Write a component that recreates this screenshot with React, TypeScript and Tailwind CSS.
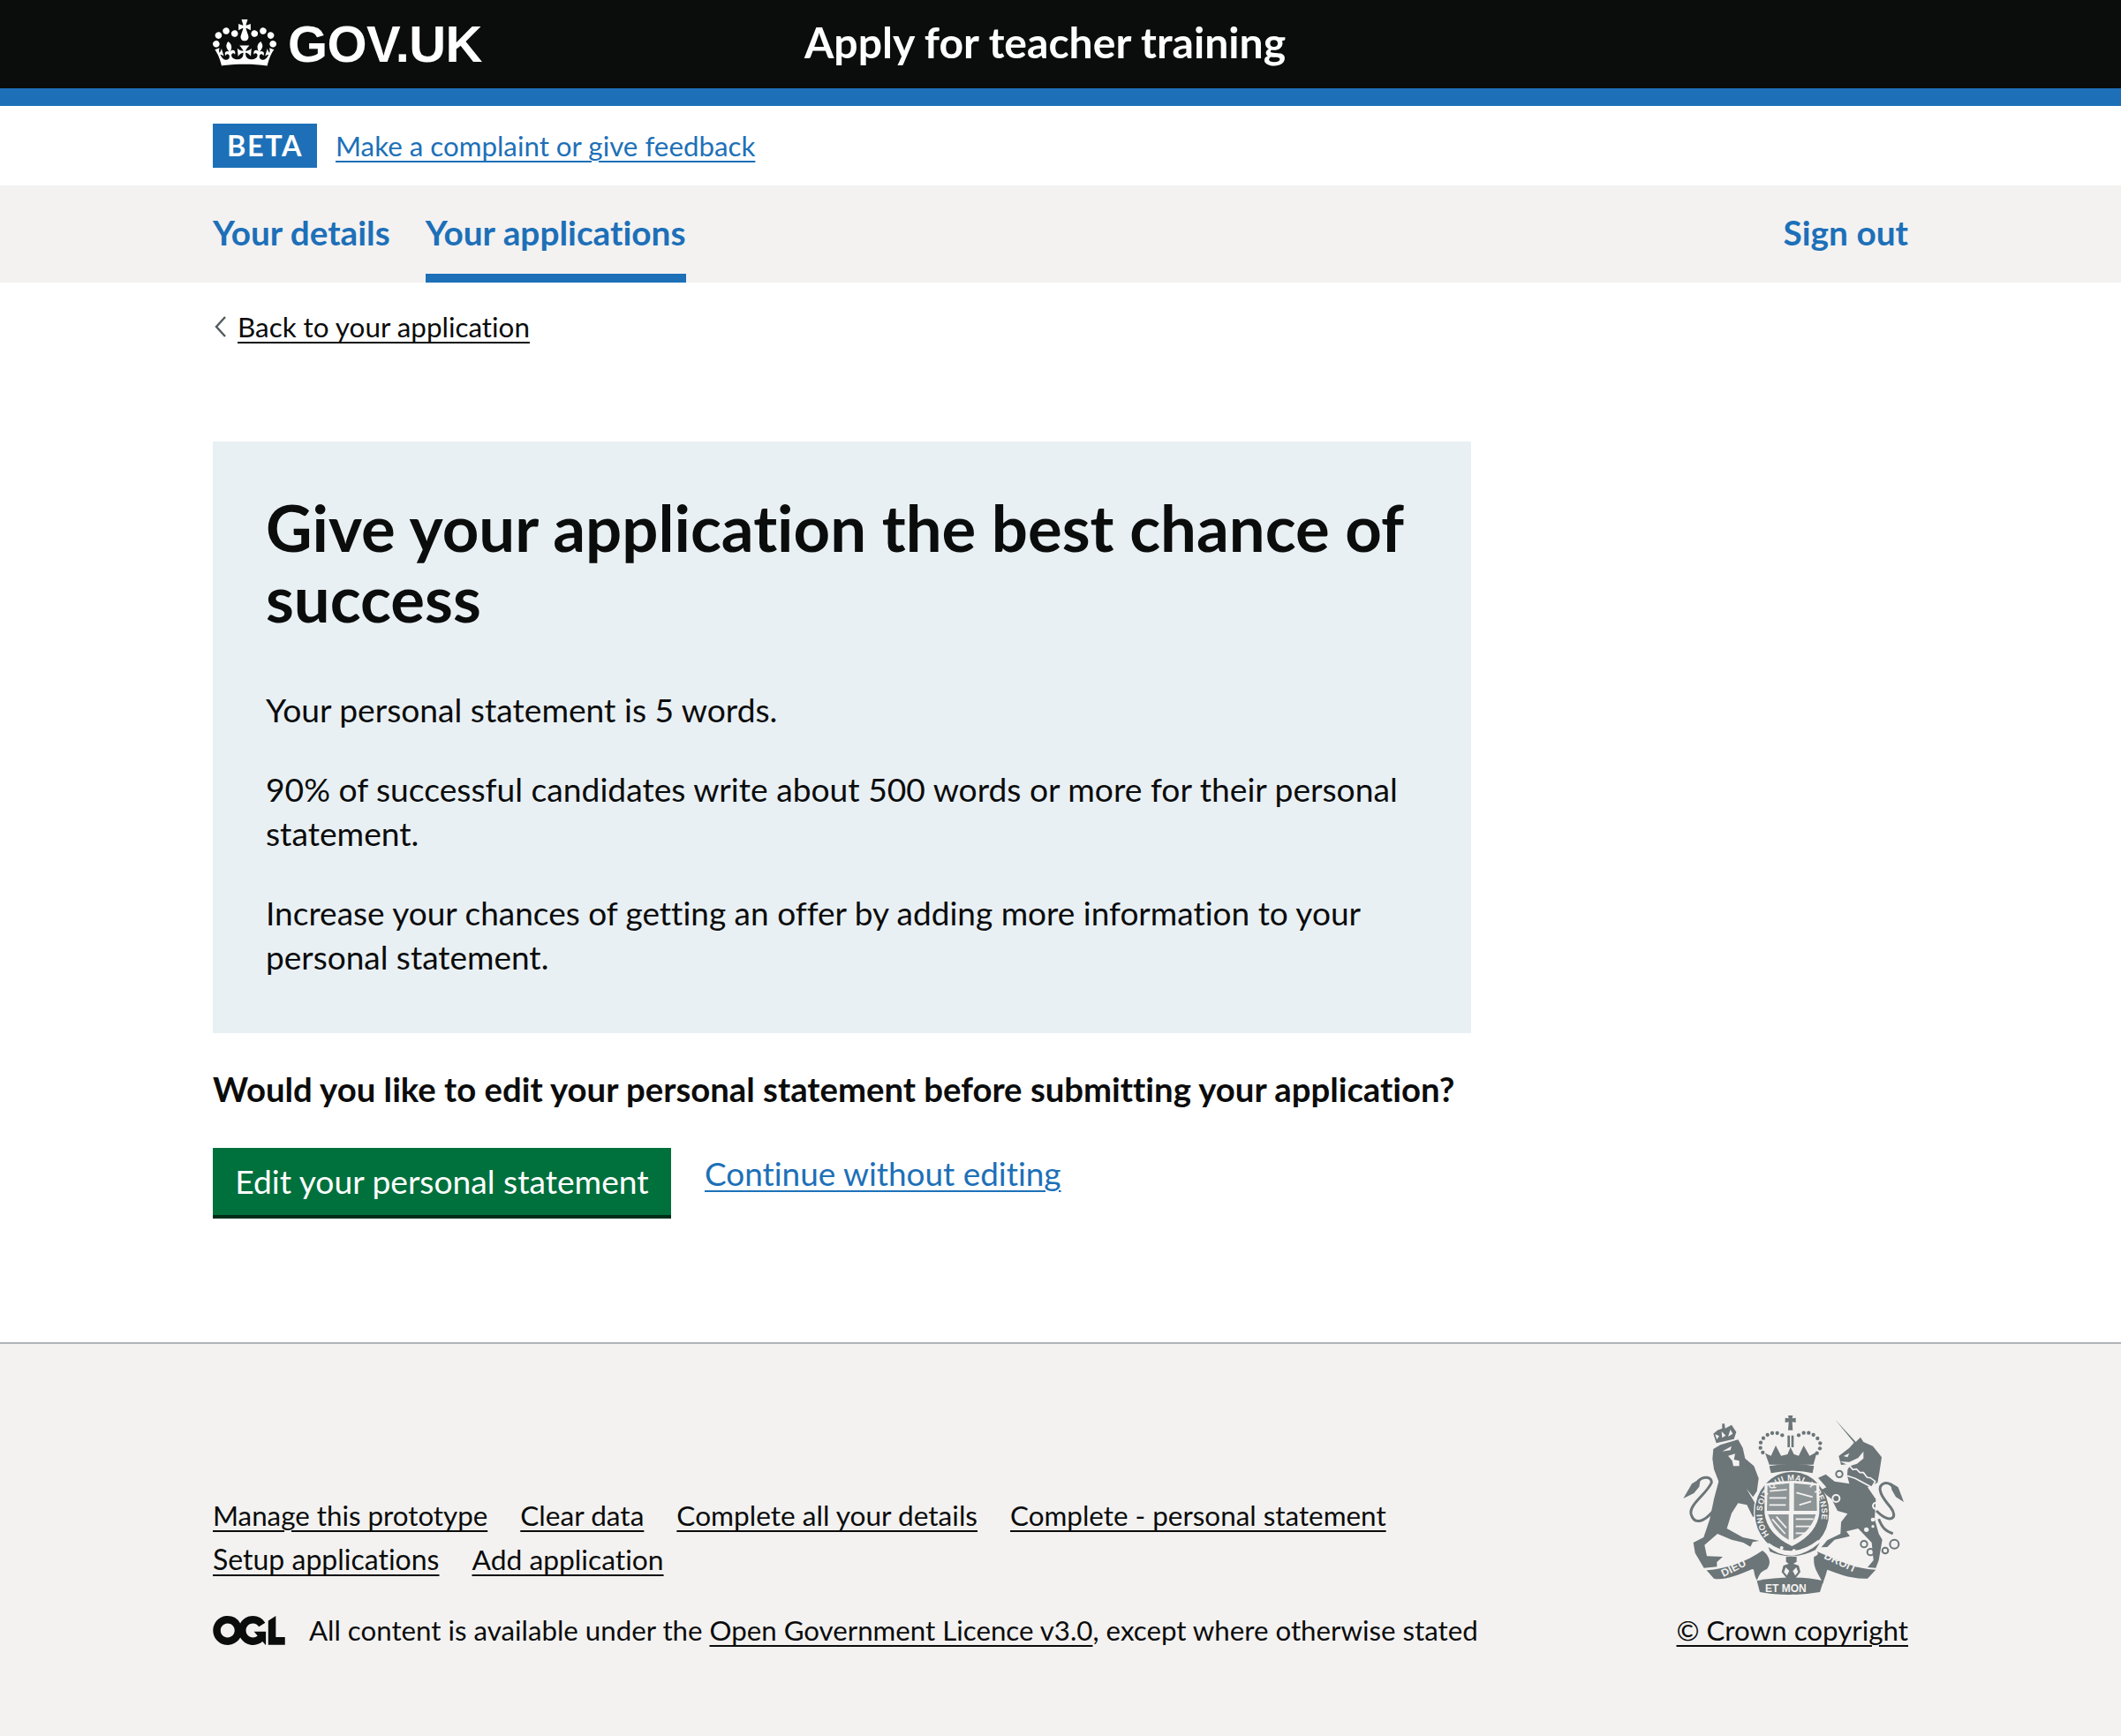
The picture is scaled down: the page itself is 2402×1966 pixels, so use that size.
import React from "react";

const Crown = () => (
  <svg viewBox="0 0 132 97" className="w-[72px] h-[53px] shrink-0 -mt-[3px]" fill="#fff" aria-hidden="true">
    <path d="M25 30.2c3.5 1.5 7.7-.2 9.1-3.7 1.5-3.6-.2-7.8-3.9-9.2-3.6-1.4-7.6.3-9.1 3.9-1.4 3.5.3 7.5 3.9 9zM9 39.5c3.6 1.5 7.8-.2 9.2-3.7 1.5-3.6-.2-7.8-3.9-9.1-3.6-1.5-7.6.2-9.1 3.8-1.4 3.5.3 7.5 3.8 9zM4.4 57.2c3.5 1.5 7.7-.2 9.1-3.8 1.5-3.6-.2-7.7-3.9-9.1-3.5-1.5-7.6.3-9.1 3.8-1.4 3.5.3 7.6 3.9 9.1zm38.3-21.4c3.5 1.5 7.7-.2 9.1-3.8 1.5-3.6-.2-7.7-3.9-9.1-3.6-1.5-7.6.3-9.1 3.8-1.3 3.6.4 7.7 3.9 9.1zm64.4-5.6c-3.6 1.5-7.8-.2-9.1-3.7-1.5-3.6.2-7.8 3.8-9.2 3.6-1.4 7.7.3 9.2 3.9 1.3 3.5-.4 7.5-3.9 9zm15.9 9.3c-3.6 1.5-7.7-.2-9.1-3.7-1.5-3.6.2-7.8 3.7-9.1 3.6-1.5 7.7.2 9.2 3.8 1.5 3.5-.3 7.5-3.8 9zm4.7 17.7c-3.6 1.5-7.8-.2-9.2-3.8-1.5-3.6.2-7.7 3.9-9.1 3.6-1.5 7.7.3 9.2 3.8 1.3 3.5-.4 7.6-3.9 9.1zM89.3 35.8c-3.6 1.5-7.8-.2-9.2-3.8-1.4-3.6.2-7.7 3.9-9.1 3.6-1.5 7.7.3 9.2 3.8 1.4 3.6-.3 7.7-3.9 9.1zM69.7 17.7l8.9 4.7V9.3l-8.9 2.8c-.2-.3-.5-.6-.9-.9L72.4 0H59.6l3.5 11.2c-.3.3-.6.5-.9.9l-8.8-2.8v13.1l8.8-4.7c.3.3.6.7.9.9l-5 15.4v.1c-.2.8-.4 1.6-.4 2.4 0 4.1 3.1 7.5 7 8.1h.2c.3 0 .7.1 1 .1.4 0 .7 0 1-.1h.2c4-.6 7.1-4.1 7.1-8.1 0-.8-.1-1.7-.4-2.4V34l-5.1-15.4c.4-.2.7-.6 1-.9zM66 92.8c16.9 0 32.8 1.1 47.1 3.2 4-16.9 8.9-26.7 14-33.5l-9.6-3.4c1 4.9 1.1 7.2 0 10.2-1.5-1.4-3-4.3-4.2-8.7L108.6 76c2.8-2 5-3.2 7.5-3.3-4.4 9.4-10 11.9-13.6 11.2-4.3-.8-6.3-4.6-5.6-7.9 1-4.7 5.7-5.9 8-.5 4.3-8.7-3-11.4-7.6-8.8 7.1-7.2 7.9-13.5 2.1-21.1-8 6.1-8.1 12.3-4.5 20.8-4.7-5.4-12.1-2.5-9.5 6.2 3.4-5.2 7.9-2 7.2 3.1-.6 4.3-6.4 7.8-13.5 7.2-10.3-.9-10.9-8-11.2-13.8 2.5-.5 7.1 1.8 11 7.3L80.2 60c-4.1 4.4-8 5.3-12.3 5.4 1.4-4.4 8-11.6 8-11.6H55.5s6.4 7.2 7.9 11.6c-4.2-.1-8-1-12.3-5.4l1.4 16.4c3.9-5.5 8.5-7.7 10.9-7.3-.3 5.8-.9 12.8-11.1 13.8-7.2.6-12.9-2.9-13.5-7.2-.7-5 3.8-8.3 7.1-3.1 2.7-8.7-4.6-11.6-9.4-6.2 3.7-8.5 3.6-14.7-4.6-20.8-5.8 7.6-5 13.9 2.2 21.1-4.7-2.6-11.9.1-7.7 8.8 2.3-5.5 7.1-4.2 8.1.5.7 3.3-1.3 7.1-5.7 7.9-3.5.7-9-1.8-13.5-11.2 2.5.1 4.7 1.3 7.5 3.3l-4.7-15.4c-1.2 4.4-2.7 7.2-4.3 8.7-1.1-3-.9-5.3 0-10.2l-9.5 3.4c5 6.9 9.9 16.7 14 33.5 14.8-2.1 30.8-3.2 47.7-3.2z" />
  </svg>
);

const Ogl = () => (
  <svg viewBox="0 0 483.2 195.7" className="w-[82px] h-[33px] shrink-0" fill="#0b0c0c" aria-hidden="true">
    <path d="M421.5 142.8V.1l-50.7 32.3v161.1h112.4v-50.7zm-122.3-9.6A47.12 47.12 0 0 1 221 97.8c0-26 21.1-47.1 47.1-47.1 16.7 0 31.4 8.7 39.7 21.8l42.7-27.2A97.63 97.63 0 0 0 268.1 0c-36.5 0-68.3 20.1-85.1 49.7A98 98 0 0 0 97.8 0C43.9 0 0 43.9 0 97.8s43.9 97.8 97.8 97.8c36.5 0 68.3-20.1 85.1-49.7a97.76 97.76 0 0 0 149.6 25.4l19.4 22.2h3v-87.8h-80l24.3 27.5zM97.8 145c-26 0-47.1-21.1-47.1-47.1s21.1-47.1 47.1-47.1 47.2 21 47.2 47S123.8 145 97.8 145" />
  </svg>
);

const G = "#6c7578";
const BG = "#f3f2f1";

const Crest = () => (
  <svg viewBox="135 65 750 612" className="w-[250px] h-[204px] mr-[5px]" aria-hidden="true">
    <defs>
      <path id="garter" d="M432 478 A101 112 0 1 1 578 478" />
    </defs>
    {/* lion */}
    <path fill={G} d="M238 182 L262 168 L322 150 L338 178 L346 214 L376 240 L392 282 L386 325 L373 345 L350 316 L385 375 L392 410 L372 412 L352 372 L322 366 L300 400 L284 452 L338 482 L394 494 L372 498 L364 514 L340 500 L300 490 L252 470 L208 508 L216 546 L270 548 L250 566 L250 582 L206 586 L176 535 L170 500 L205 482 L226 420 L240 352 L256 292 L240 250 L235 215 Z" />
    <path fill={BG} d="M268 190 L300 172 L296 186 Z M288 205 L312 198 L308 218 L326 222 L326 240 L306 240 L302 222 Z" />
    <path fill="none" stroke={G} strokeWidth="9" d="M238 392 C205 432 172 440 162 402 C156 370 215 335 232 296 C232 276 205 272 185 292" />
    <path fill={G} d="M195 282 L165 300 L136 350 L172 332 L190 310 Z" />
    {/* lion crown */}
    <path fill={G} d="M248 162 L238 130 L252 118 L268 112 L268 96 L276 96 L278 112 L300 100 L316 124 L308 148 Z" />
    <path fill={BG} d="M250 150 L244 132 L258 138 Z M268 144 L266 122 L280 136 Z M288 140 L296 116 L304 130 Z" />
    {/* central crown */}
    <g fill={G}>
      <path d="M492 68 L508 68 L506 78 L518 76 L518 92 L506 90 L508 118 L492 118 L494 90 L482 92 L482 76 L494 78 Z" />
      <rect x="490" y="136" width="8" height="40" />
      <rect x="503" y="136" width="8" height="40" />
      <path d="M414 196 L434 205 L450 170 L468 205 L490 200 L500 176 L512 200 L528 205 L545 170 L565 205 L590 192 L578 235 L428 235 Z" />
      <path d="M428 240 Q505 225 580 240 L575 264 Q505 248 434 264 Z" />
      {[[398,178],[399,160],[408,145],[422,134],[438,128],[455,128],[472,135],[528,135],[545,127],[562,127],[578,134],[592,146],[601,162],[600,180],[590,196],[406,194]].map(([x,y],i)=>(<circle key={i} cx={x} cy={y} r="6.5"/>))}
    </g>
    {/* garter and shield */}
    <ellipse cx="505" cy="398" rx="128" ry="140" fill={G} stroke={BG} strokeWidth="4" />
    <path fill={BG} d="M412 300 Q505 280 598 300 L598 400 Q590 470 505 512 Q420 470 412 400 Z" />
    <path fill={G} d="M422 306 L496 298 L496 392 L420 392 Z M512 298 L588 306 L590 392 L512 392 Z M424 404 L494 404 L494 490 Q445 465 424 404 Z M510 404 L586 404 Q568 465 510 490 Z" opacity="0.75" />
    <path stroke={BG} strokeWidth="5" fill="none" d="M430 325 L488 320 M428 348 L486 348 M428 372 L484 372 M520 330 L575 345 M530 372 L570 360 M438 420 L482 470 M452 412 L486 450 M518 420 L578 420 M518 445 L570 445 M518 468 L552 468" />
    <text fontFamily="Liberation Sans, sans-serif" fontWeight="700" fontSize="28" letterSpacing="1.5" fill={BG}>
      <textPath href="#garter" startOffset="6">HONI SOIT QUI MAL Y PENSE</textPath>
    </text>
    <path fill={BG} d="M425 500 Q505 560 595 490 L600 500 Q505 580 425 515 Z" />
    <path fill={G} d="M425 515 Q505 580 600 500 L585 525 Q505 565 430 530 Z" />
    <circle cx="470" cy="518" r="6" fill={BG} />
    <circle cx="512" cy="528" r="6" fill={BG} />
    {/* unicorn */}
    <path fill={G} d="M652 82 L722 158 L738 142 L748 158 L780 172 L810 210 L802 262 L796 296 L762 312 L790 352 L786 420 L800 470 L812 490 L800 560 L790 586 L762 584 L782 560 L776 500 L730 452 L690 462 L702 478 L650 490 L625 515 L605 516 L625 492 L670 470 L672 430 L694 402 L660 392 L640 352 L622 338 L606 320 L622 312 L594 280 L620 268 L650 292 L700 300 L690 262 L702 232 L672 236 L664 206 L700 178 L716 160 Z" />
    <path fill={BG} d="M680 206 L700 196 L694 210 Z M668 224 L700 226 L730 212 L748 190 L748 214 L726 232 L702 240 Z" />
    <path fill={G} stroke={BG} strokeWidth="5" d="M692 250 L700 238 L712 252 L724 250 L736 262 L748 262 L760 278 L772 280 L788 292 L776 312 L720 282 L690 272 Z" />
    <g fill="none" stroke={G} strokeWidth="6">
      <circle cx="666" cy="267" r="11" />
      <circle cx="655" cy="350" r="12" stroke={BG} />
      <circle cx="790" cy="375" r="10" stroke={BG} />
      <circle cx="750" cy="505" r="11" />
      <circle cx="772" cy="532" r="11" />
      <circle cx="822" cy="527" r="10" />
      <circle cx="853" cy="505" r="15" />
    </g>
    <g fill={BG}>
      <circle cx="780" cy="422" r="7" /><circle cx="758" cy="456" r="8" /><circle cx="780" cy="445" r="5" />
    </g>
    <path fill="none" stroke={G} strokeWidth="9" d="M792 392 C840 440 868 415 840 380 C815 350 785 310 820 298 C838 296 846 305 852 318" />
    <path fill={G} d="M840 296 L866 312 L885 362 L858 345 L844 320 Z" />
    <path fill="none" stroke={G} strokeWidth="9" d="M800 420 C815 460 832 462 848 470" />
    {/* fleur */}
    <path fill={G} d="M485 548 H521 V565 L510 572 L528 578 L534 600 L516 622 L502 628 L488 622 L470 600 L476 578 L494 572 L485 565 Z" />
    <path fill={BG} d="M484 584 L496 596 L488 612 L478 600 Z M520 584 L508 596 L516 612 L526 600 Z" />
    {/* scroll */}
    <path fill={G} d="M215 594 C280 590 350 565 405 527 C430 545 436 570 420 590 C395 600 395 610 386 628 C372 602 380 590 370 590 C320 612 270 630 240 622 Z" />
    <path fill={G} d="M580 548 C600 540 592 535 590 530 C660 560 720 590 790 592 L762 622 C700 625 650 600 625 592 C620 612 614 625 610 640 C600 610 575 590 580 548 Z" />
    <path fill={G} d="M386 630 C460 615 550 615 612 630 L600 668 C530 680 460 680 396 668 Z" />
    <g fontFamily="Liberation Sans, sans-serif" fontWeight="700" fill={BG}>
      <text transform="translate(272 617) rotate(-27)" fontSize="36" letterSpacing="1">DIEU</text>
      <text x="414" y="667" fontSize="36">ET MON</text>
      <text transform="translate(612 553) rotate(25)" fontSize="36" letterSpacing="1">DROIT</text>
    </g>
  </svg>
);

const Chevron = () => (
  <svg viewBox="0 0 14 26" className="w-[14px] h-[26px] shrink-0" fill="none" stroke="#505a5f" strokeWidth="2.4" aria-hidden="true">
    <path d="M12 2 L2 13 L12 24" />
  </svg>
);

const fl = "underline decoration-2 underline-offset-[5px] text-[#0b0c0c]";

export default function App() {
  return (
    <div className="min-h-[1966px] bg-white text-[#0b0c0c] [font-family:Lato,sans-serif] [font-variant-ligatures:none] flex flex-col">
      <header className="bg-[#0b0c0c] h-[100px] px-[241px] flex items-center shrink-0">
        <div className="flex items-center w-[670px]">
          <Crown />
          <span className="ml-[13px] text-white text-[58px] leading-none font-bold tracking-[-0.6px] [font-family:'Liberation_Sans',sans-serif]">GOV.UK</span>
        </div>
        <span className="text-white text-[48.1px] leading-[60px] font-bold -mt-[5px]">Apply for teacher training</span>
      </header>
      <div className="h-[20px] bg-[#1d70b8] shrink-0" />
      <div className="h-[90px] px-[241px] flex items-center shrink-0">
        <strong className="bg-[#1d70b8] text-white h-[50px] w-[118px] flex items-center justify-center text-[32.4px] font-bold tracking-[1.6px]">BETA</strong>
        <a className="ml-[21px] text-[31.3px] leading-[40px] text-[#1d70b8] underline decoration-2 underline-offset-[5px]">Make a complaint or give feedback</a>
      </div>
      <nav className="h-[110px] bg-[#f3f2f1] px-[241px] flex justify-between shrink-0">
        <ul className="flex gap-[40px]">
          <li className="pt-[28px] pb-[22px] border-b-[10px] border-transparent text-[38.7px] leading-[50px] font-bold text-[#1d70b8]">Your details</li>
          <li className="pt-[28px] pb-[22px] border-b-[10px] border-[#1d70b8] text-[38.8px] leading-[50px] font-bold text-[#1d70b8]">Your applications</li>
        </ul>
        <a className="pt-[28px] text-[38.8px] leading-[50px] font-bold text-[#1d70b8]">Sign out</a>
      </nav>
      <main className="px-[241px] flex-1">
        <a className="mt-[30px] flex items-center gap-[12px] text-[31.4px] leading-[40px] pl-[2px]">
          <Chevron />
          <span className={fl}>Back to your application</span>
        </a>
        <section className="mt-[110px] w-[1425px] bg-[#e9f0f4] pt-[57px] pb-[60px] px-[60px]">
          <h1 className="text-[72.5px] leading-[80px] font-bold mb-[62px]">Give your application the best chance of success</h1>
          <p className="text-[37.2px] leading-[50px] mb-[40px]">Your personal statement is 5 words.</p>
          <p className="text-[37.2px] leading-[50px] mb-[40px]">90% of successful candidates write about 500 words or more for their personal statement.</p>
          <p className="text-[37px] leading-[50px] pb-[1px]">Increase your chances of getting an offer by adding more information to your personal statement.</p>
        </section>
        <p className="mt-[38px] text-[38.3px] leading-[50px] font-bold">Would you like to edit your personal statement before submitting your application?</p>
        <div className="mt-[42px] flex items-start gap-[38px]">
          <button className="h-[80px] w-[519px] bg-[#00703c] border-b-4 border-[#002d18] text-white text-[37.2px] leading-[50px]">Edit your personal statement</button>
          <a className="mt-[4px] text-[36.9px] leading-[50px] text-[#1d70b8] underline decoration-2 underline-offset-[5px]">Continue without editing</a>
        </div>
      </main>
      <footer className="h-[446px] shrink-0 bg-[#f3f2f1] border-t-2 border-[#b1b4b6] pt-[80px] pb-[100px] px-[241px] flex justify-between items-end text-[31.3px] leading-[40px]">
        <div>
          <ul className="flex flex-wrap gap-x-[37px] gap-y-[10px] w-[1400px]">
            <li className={fl}>Manage this prototype</li>
            <li className={fl + " text-[31.6px]"}>Clear data</li>
            <li className={fl + " text-[31.6px]"}>Complete all your details</li>
            <li className={fl + " text-[31.4px]"}>Complete - personal statement</li>
            <li className={fl + " text-[32px]"}>Setup applications</li>
            <li className={fl + " text-[31.8px]"}>Add application</li>
          </ul>
          <div className="mt-[40px] flex items-center gap-[27px]">
            <Ogl />
            <span className="text-[31.25px]">All content is available under the <a className={fl}>Open Government Licence v3.0</a>, except where otherwise stated</span>
          </div>
        </div>
        <div className="flex flex-col items-end">
          <Crest />
          <a className={"mt-[20px] " + fl}>© Crown copyright</a>
        </div>
      </footer>
    </div>
  );
}
